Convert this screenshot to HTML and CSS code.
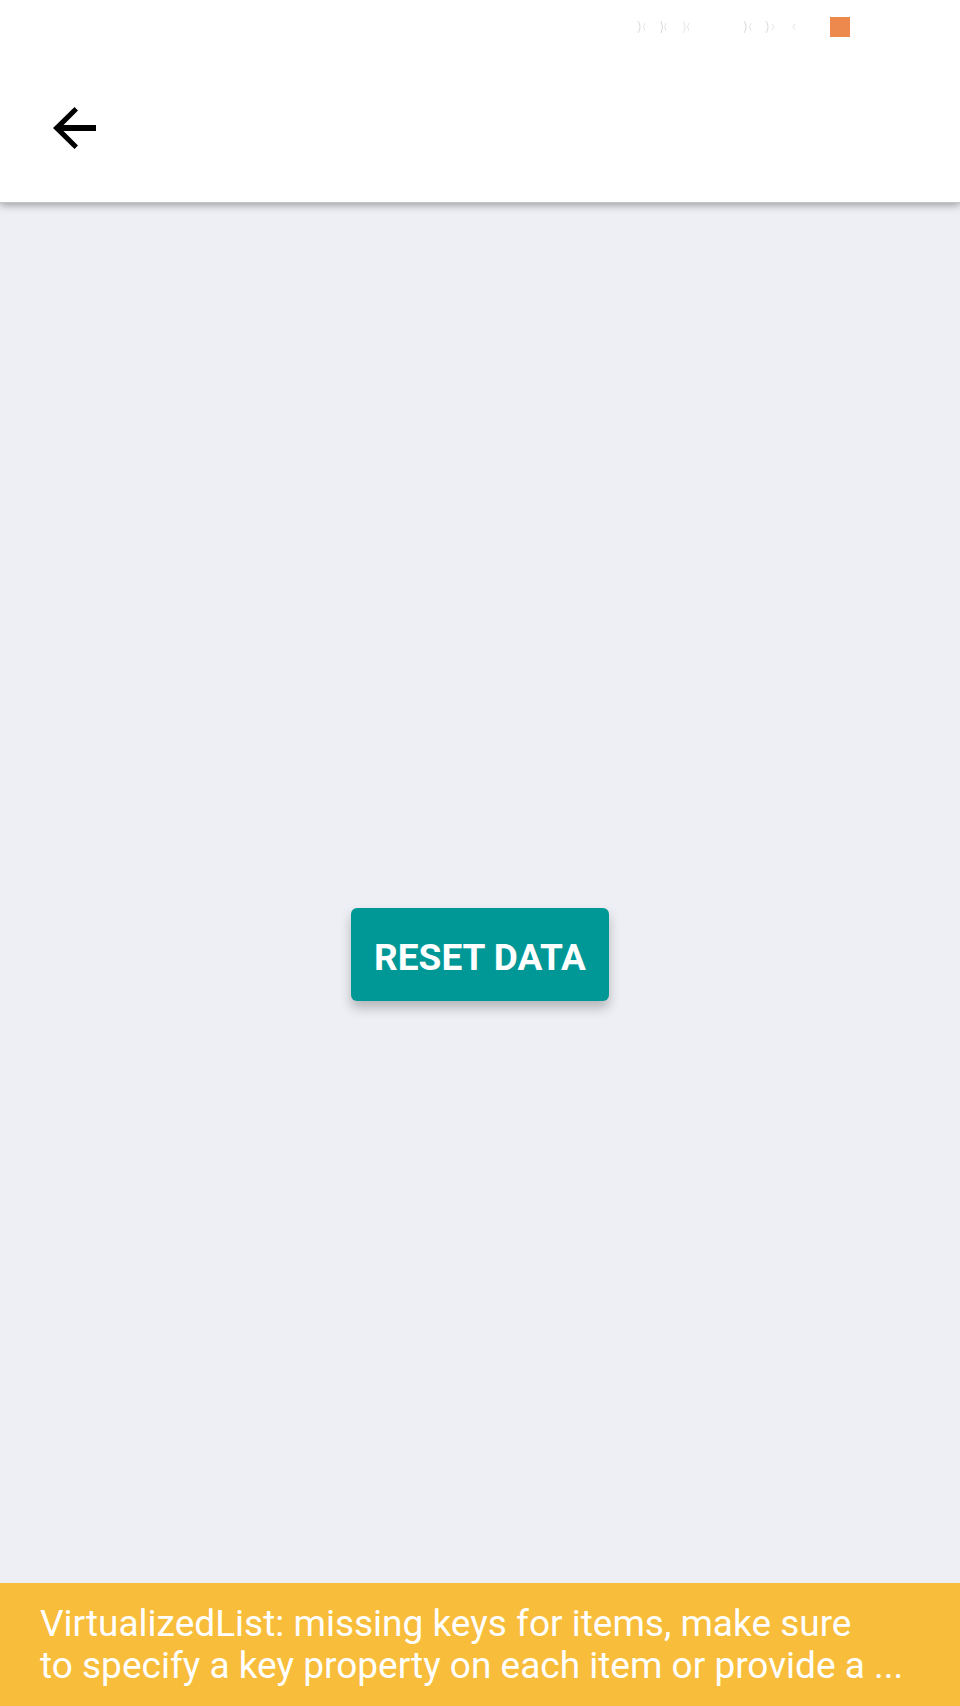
FILE: index.html
```html
<!DOCTYPE html>
<html lang="en">
<head>
<meta charset="utf-8">
<meta name="viewport" content="width=device-width, initial-scale=1">
<title>Reset data</title>
<link rel="stylesheet" href="styles.css">
</head>
<body>
<div class="screen">
  <header class="header">
    <div class="status">
      <svg class="status-marks" width="168" height="20" viewBox="0 0 168 20" fill="none" stroke-width="1" aria-hidden="true">
        <path stroke="#d9d9d9" d="M6 4q4 6 0 12M29 4q3 6 0 12M112 4q4 6 0 12M134 4q4 6 0 12"/>
        <path stroke="#e6e6e6" d="M13 6q-3 4 0 8M34 6q-3 4 0 8M51 4q4 6 0 12M57 6q-3 4 0 8M119 6q-3 4 0 8M140 7l2 3-2 3M163 7l-2 3 2 3"/>
      </svg>
      <span class="status-square"></span>
    </div>
    <div class="toolbar">
      <button class="back" type="button" aria-label="Back">
        <svg width="43" height="42" viewBox="0 0 43 42" aria-hidden="true">
          <path d="M43 18H10.500L25 3.500 21.500 0 0 21l21.500 21 3.500-3.500L10.500 24H43z"/>
        </svg>
      </button>
    </div>
  </header>
  <main class="content">
    <button class="reset" type="button">RESET DATA</button>
  </main>
  <aside class="warning" role="status">
    <p class="warning-text">VirtualizedList: missing keys for items, make sure<br>to specify a key property on each item or provide a ...</p>
  </aside>
</div>
</body>
</html>
```

FILE: styles.css
```css
* {
  box-sizing: border-box;
}

body {
  margin: 0;
  font-family: Roboto, "Liberation Sans", sans-serif;
  background: #edeff4;
}

.screen {
  position: relative;
  display: flex;
  flex-direction: column;
  min-height: 100vh;
}

.header {
  padding-bottom: 53px;
  background: #fff;
  border-bottom: 1px solid #c6c6c9;
  box-shadow: 0 2px 8px rgba(0, 0, 0, 0.36);
}

.status {
  display: flex;
  justify-content: flex-end;
  align-items: center;
  gap: 30px;
  height: 54px;
  padding-right: 110px;
}

.status-square {
  width: 20px;
  height: 20px;
  background: #ee894e;
}

.toolbar {
  display: flex;
  padding: 53px 53px 0;
}

.back {
  display: flex;
  padding: 0;
  border: 0;
  background: none;
}

.content {
  display: flex;
  flex: 1;
  align-items: center;
  justify-content: center;
}

.reset {
  padding: 27px 23px 21px;
  border: 0;
  border-radius: 6px;
  background: #009897;
  color: #fff;
  font: 700 37px/45px Roboto, "Liberation Sans", sans-serif;
  box-shadow: 0 7px 12px rgba(0, 0, 0, 0.24);
}

.warning {
  position: absolute;
  right: 0;
  bottom: 0;
  left: 0;
  padding: 20px 40px 19px;
  background: #f8bd3a;
  color: #fff;
}

.warning-text {
  margin: 0;
  font-size: 37px;
  line-height: 42px;
}
```
